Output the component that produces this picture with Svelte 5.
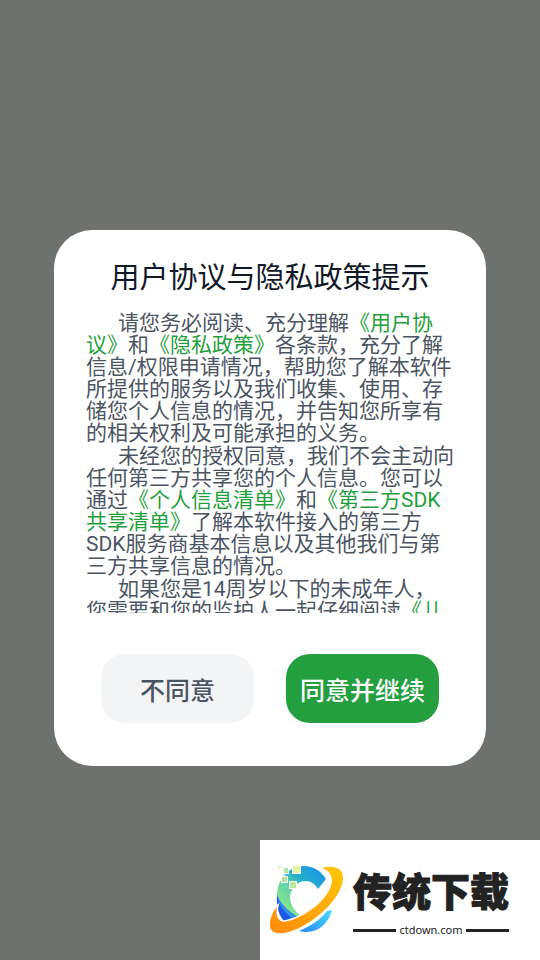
<script lang="ts">
	interface Part {
		text: string;
		href?: string;
	}

	const paragraphs: Part[][] = [
		[
			{ text: '请您务必阅读、充分理解' },
			{ text: '《用户协议》', href: '#agreement' },
			{ text: '和' },
			{ text: '《隐私政策》', href: '#privacy' },
			{ text: '各条款，充分了解信息/权限申请情况，帮助您了解本软件所提供的服务以及我们收集、使用、存储您个人信息的情况，并告知您所享有的相关权利及可能承担的义务。' }
		],
		[
			{ text: '未经您的授权同意，我们不会主动向任何第三方共享您的个人信息。您可以通过' },
			{ text: '《个人信息清单》', href: '#personal-info' },
			{ text: '和' },
			{ text: '《第三方SDK共享清单》', href: '#sdk' },
			{ text: '了解本软件接入的第三方SDK服务商基本信息以及其他我们与第三方共享信息的情况。' }
		],
		[
			{ text: '如果您是14周岁以下的未成年人，您需要和您的监护人一起仔细阅读' },
			{ text: '《儿童隐私政策》', href: '#children' }
		]
	];

	let open = $state(true);

	function close() {
		open = false;
	}
</script>

<main class="screen">
	{#if open}
		<div class="dialog" role="dialog" aria-modal="true" aria-labelledby="dialog-title">
			<h1 id="dialog-title">用户协议与隐私政策提示</h1>

			<div class="terms">
				{#each paragraphs as parts}
					<p>{#each parts as part}{#if part.href}<a href={part.href}>{part.text}</a>{:else}{part.text}{/if}{/each}</p>
				{/each}
			</div>

			<div class="actions">
				<button type="button" onclick={close}>不同意</button>
				<button type="button" class="primary" onclick={close}>同意并继续</button>
			</div>
		</div>
	{/if}

	<div class="brand">
		<svg class="brand-logo" width="76" height="72" viewBox="0 0 76 72" aria-hidden="true">
			<defs>
				<linearGradient id="arc" gradientUnits="userSpaceOnUse" x1="18" y1="46" x2="54" y2="10">
					<stop offset="0" stop-color="#8ee58c" />
					<stop offset="0.35" stop-color="#5fd3a6" />
					<stop offset="0.65" stop-color="#22aecb" />
					<stop offset="1" stop-color="#1c98e4" />
				</linearGradient>
				<linearGradient id="ring" x1="0" y1="1" x2="1" y2="0">
					<stop offset="0" stop-color="#ff8a0c" />
					<stop offset="1" stop-color="#ffc805" />
				</linearGradient>
				<linearGradient id="tail" x1="0" y1="1" x2="1" y2="0">
					<stop offset="0" stop-color="#2a86f5" />
					<stop offset="1" stop-color="#45e0ff" />
				</linearGradient>
			</defs>
			<path d="M58 15C53 7 45 2 36 2C21 2 9 15 9 32C11 42 18 50 29 54L33 52C25 46 22 39 22 33C23 23 30 17 38 17C43 17 47 20 50 25Z" fill="url(#arc)" />
			<path d="M9 31C8 43 11 53 18 59L32 54C22 49 13 41 9 31Z" fill="#1f57e6" />
			<path d="M9 31C13 41 21 49 32 54L27 56C17 50 11 42 9 31Z" fill="#3093f0" />
			<path d="M31 67C47 71 60 62 64 46L59 47C52 56 43 62 31 67Z" fill="url(#tail)" />
			<path d="M54 4C65 1 75 3 75 14C75 30 54 53 31 64C14 72 2 71 2 61C2 54 5 47 9 43C7 53 11 60 20 57C40 52 63 33 64 17C64 10 60 6 54 4Z" fill="none" stroke="#fff" stroke-width="3" />
			<path d="M54 4C65 1 75 3 75 14C75 30 54 53 31 64C14 72 2 71 2 61C2 54 5 47 9 43C7 53 11 60 20 57C40 52 63 33 64 17C64 10 60 6 54 4Z" fill="url(#ring)" />
			<g fill="#fff">
				<rect x="24" y="1" width="9" height="9" />
				<rect x="15" y="3" width="6" height="7" />
				<rect x="13" y="12" width="7" height="7" />
				<rect x="21" y="17" width="8" height="8" />
			</g>
			<rect x="25" y="2" width="7" height="7" fill="#e2f3a2" />
			<rect x="16" y="4" width="4" height="5" fill="#b3e6a0" />
			<rect x="10" y="2" width="3" height="3" fill="#eaf6bd" />
			<rect x="14" y="13" width="5" height="5" fill="#b0e69a" />
			<rect x="22" y="18" width="6" height="6" fill="#b4ea98" />
		</svg>
		<div class="brand-text">
			<strong>传统下载</strong>
			<span>ctdown.com</span>
		</div>
	</div>
</main>

<style>
	:global(body) {
		margin: 0;
		background: #6d726e;
	}

	.screen {
		position: relative;
		box-sizing: border-box;
		display: flex;
		flex-direction: column;
		align-items: center;
		min-height: 100vh;
		padding: 230px 0 194px;
		background: #6d726e;
		font-family: Roboto, 'Noto Sans CJK SC', sans-serif;
	}

	.dialog {
		box-sizing: border-box;
		width: 80%;
		padding: 24px 32px 43px;
		border-radius: 38px;
		background: #fff;
	}

	h1 {
		margin: 0 0 10px;
		font-size: 29px;
		font-weight: 390;
		line-height: 48px;
		text-align: center;
		color: #111827;
	}

	.terms {
		height: 301px;
		overflow-y: auto;
		scrollbar-width: none;
		font-size: 21px;
		font-weight: 390;
		line-height: 22px;
		color: #4b5563;
	}

	.terms p {
		margin: 0 0 1px;
		text-indent: 32px;
	}

	.terms a {
		color: #1fa03c;
		text-decoration: none;
	}

	.actions {
		display: flex;
		gap: 32px;
		margin-top: 41px;
		padding: 0 15px;
	}

	button {
		flex: 1;
		height: 69px;
		padding: 0;
		border: 0;
		border-radius: 24px;
		background: #f3f4f6;
		color: #4b5563;
		font-family: inherit;
		font-size: 25px;
		font-weight: 500;
		white-space: nowrap;
		cursor: pointer;
	}

	.primary {
		background: #249f40;
		color: #fff;
	}

	.brand {
		position: absolute;
		right: 0;
		bottom: 0;
		box-sizing: border-box;
		display: flex;
		align-items: center;
		gap: 9px;
		width: 280px;
		height: 120px;
		padding-left: 8px;
		background: #fff;
		color: #222;
	}

	.brand-text {
		display: flex;
		flex-direction: column;
		width: 156px;
		padding-top: 6px;
	}

	.brand-text strong {
		font-size: 39px;
		font-weight: 900;
		line-height: 54px;
		white-space: nowrap;
		-webkit-text-stroke: 1px #222;
	}

	.brand-text span {
		display: flex;
		align-items: center;
		gap: 3px;
		font-family: 'Noto Sans', sans-serif;
		font-size: 11px;
		line-height: 20px;
	}

	.brand-text span::before,
	.brand-text span::after {
		content: '';
		flex: 1;
		height: 3px;
		background: #222;
	}
</style>
